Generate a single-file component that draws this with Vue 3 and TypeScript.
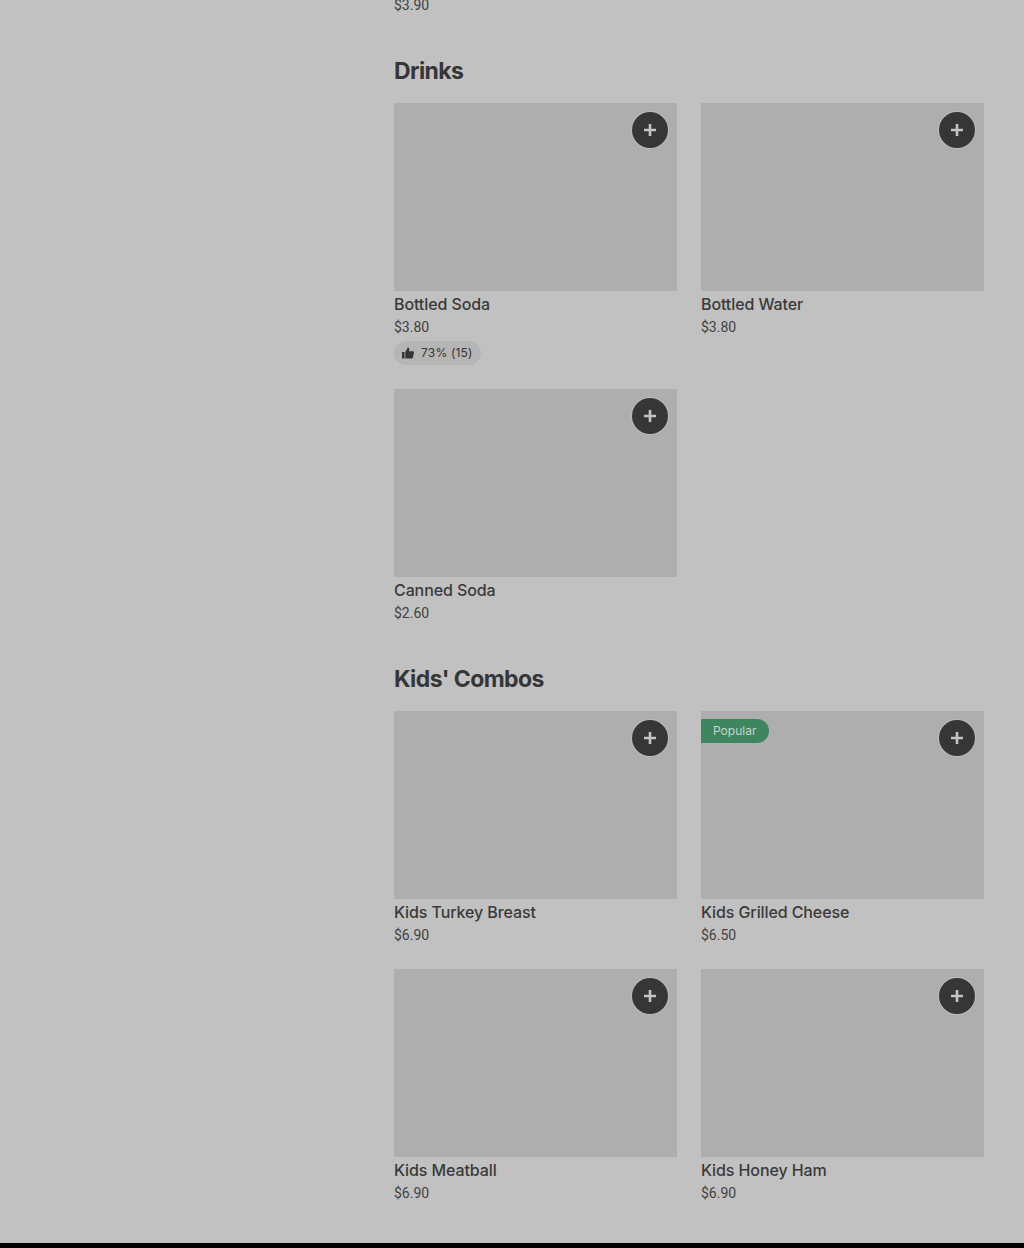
<script setup lang="ts">
interface Item {
  name: string
  price: string
  rating?: string
  badge?: string
}

interface Section {
  title: string
  items: Item[]
}

const sections: Section[] = [
  {
    title: "Drinks",
    items: [
      { name: "Bottled Soda", price: "$3.80", rating: "73% (15)" },
      { name: "Bottled Water", price: "$3.80" },
      { name: "Canned Soda", price: "$2.60" },
    ],
  },
  {
    title: "Kids' Combos",
    items: [
      { name: "Kids Turkey Breast", price: "$6.90" },
      { name: "Kids Grilled Cheese", price: "$6.50", badge: "Popular" },
      { name: "Kids Meatball", price: "$6.90" },
      { name: "Kids Honey Ham", price: "$6.90" },
    ],
  },
]
</script>

<template>
  <div class="page">
    <main class="menu">
      <p class="price cut-off">$3.90</p>
      <section v-for="section in sections" :key="section.title" class="section">
        <h2 class="section-title">{{ section.title }}</h2>
        <div class="grid">
          <article v-for="item in section.items" :key="item.name" class="card">
            <div class="photo">
              <span v-if="item.badge" class="badge">{{ item.badge }}</span>
              <button class="add" type="button" aria-label="Add">
                <svg width="14" height="14" viewBox="0 0 14 14">
                  <path d="M5.7 1h2.6v4.7H13v2.6H8.300V13H5.700V8.300H1V5.700h4.700z" fill="currentColor" />
                </svg>
              </button>
            </div>
            <h3 class="name">{{ item.name }}</h3>
            <p class="price">{{ item.price }}</p>
            <div v-if="item.rating" class="rating">
              <svg width="12" height="12" viewBox="0 0 12 12">
                <path d="M0 5h2.500v6.500H0zM3.300 5 5.800.5c.9 0 1.500.6 1.500 1.500L7 4.300h4.200c.6 0 .9.500.8 1l-1.100 5.400c-.1.500-.5.800-1 .8H3.300z" fill="currentColor" />
              </svg>
              <span>{{ item.rating }}</span>
            </div>
          </article>
        </div>
      </section>
    </main>
    <div class="footer"></div>
  </div>
</template>

<style>
html,
body {
  margin: 0;
  background: #c1c1c1;
}
</style>

<style scoped>
.page {
  height: 1248px;
  overflow: hidden;
  display: flex;
  flex-direction: column;
  font-family: Inter, "Liberation Sans", sans-serif;
  color: #3a3a3a;
  background: #c1c1c1;
}
.menu {
  flex: 1;
  margin-top: -5px;
  padding-left: 394px;
  width: 590px;
}
.section {
  margin-bottom: 32px;
}
.section-title {
  margin: 0;
  height: 56px;
  padding-top: 8px;
  box-sizing: border-box;
  font-size: 23px;
  line-height: 32px;
  font-weight: 700;
  letter-spacing: -0.6px;
  color: #363636;
}
.grid {
  display: grid;
  grid-template-columns: 283px 283px;
  column-gap: 24px;
  row-gap: 24px;
  align-items: start;
}
.photo {
  position: relative;
  height: 188px;
  background: #aeaeae;
}
.add {
  position: absolute;
  top: 9px;
  right: 9px;
  width: 36px;
  height: 36px;
  padding: 0;
  border: none;
  border-radius: 50%;
  background: #363636;
  color: #c4c4c4;
  box-shadow: 0 0 0 1px #bcbcbc;
  display: flex;
  align-items: center;
  justify-content: center;
}
.badge {
  position: absolute;
  top: 8px;
  left: 0;
  height: 24px;
  padding: 0 13px 0 12px;
  border-radius: 0 12px 12px 0;
  background: #3f8560;
  color: #c4d6cc;
  font-size: 12px;
  line-height: 24px;
}
.name {
  margin: 1px 0 0;
  font-size: 16px;
  line-height: 25px;
  font-weight: 500;
  letter-spacing: -0.1px;
}
.price {
  margin: 0;
  font-family: Roboto, "Liberation Sans", sans-serif;
  font-size: 14px;
  line-height: 20px;
  color: #424242;
}
.price.cut-off {
  margin-bottom: 32px;
}
.rating {
  display: inline-flex;
  align-items: center;
  gap: 7px;
  box-sizing: border-box;
  height: 24px;
  margin-top: 4px;
  padding: 0 8px 1px;
  border-radius: 12px;
  background: #b5b5b5;
  font-size: 12px;
  letter-spacing: 0.2px;
  color: #363636;
}
.footer {
  height: 5px;
  flex: none;
  background: #000;
}
</style>
